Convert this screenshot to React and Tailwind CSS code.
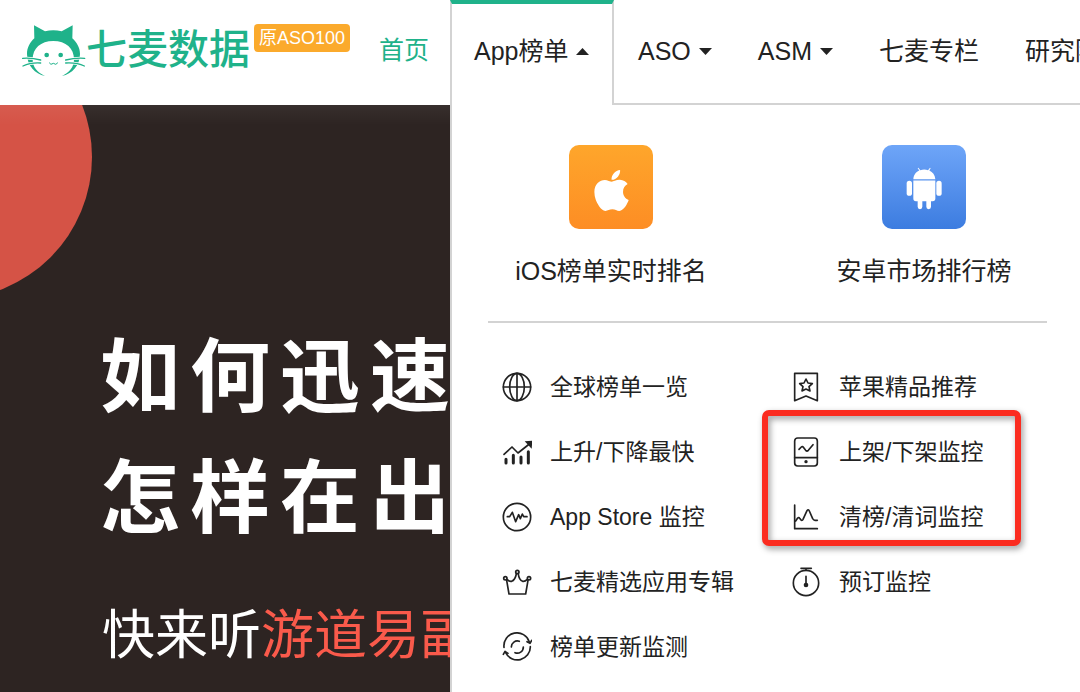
import React from "react";
import { FaApple } from "react-icons/fa";

const LineIcon = ({ children }) => (
  <svg
    viewBox="0 0 90 90"
    className="w-[30px] h-[30px] shrink-0"
    fill="none"
    stroke="currentColor"
    strokeWidth="5"
    strokeLinecap="round"
    strokeLinejoin="round"
    aria-hidden="true"
  >
    {children}
  </svg>
);

const GlobeIcon = () => (
  <LineIcon>
    <circle cx="45" cy="45" r="41" />
    <ellipse cx="45" cy="45" rx="22" ry="41" />
    <path d="M45 4V86M4 45H86" />
  </LineIcon>
);

const TrendIcon = () => (
  <LineIcon>
    <path d="M12 67V78M34 55V78M57 60V78M79 44V78" strokeWidth="9" />
    <path d="M6 52L30 30L48 48L82 21" />
    <path d="M68 13L91 11L89 35Z" fill="currentColor" stroke="none" />
  </LineIcon>
);

const PulseIcon = () => (
  <LineIcon>
    <circle cx="45" cy="45" r="41" />
    <path d="M16 44H23L31 31L41 59L50 38L55 50L61 36L65 44H75" />
  </LineIcon>
);

const CrownIcon = () => (
  <LineIcon>
    <circle cx="10" cy="34" r="5" />
    <circle cx="46" cy="15" r="5" />
    <circle cx="81" cy="34" r="5" />
    <path d="M14 40L21 81H71L78 40" />
    <path d="M15 37C20 42 24 44 29 43C37 40 41 31 43 21M76 37C71 42 67 44 62 43C54 40 50 31 49 21" />
  </LineIcon>
);

const RefreshIcon = () => (
  <LineIcon>
    <path d="M6 46A39 39 0 0 1 82 30M85 44A39 39 0 0 1 11 62" />
    <path d="M75 29L84 34L89 25M4 67L9 58L18 64" />
    <path d="M28 45A18 18 0 0 1 52 28M64 45A18 18 0 0 1 39 62" />
  </LineIcon>
);

const BookmarkIcon = () => (
  <LineIcon>
    <path d="M11 4H79V86L45 72L11 86Z" />
    <path d="M45 21L51 33L64 35L54 44L57 57L45 51L33 57L36 44L26 35L39 33Z" />
  </LineIcon>
);

const PhoneIcon = () => (
  <LineIcon>
    <rect x="11" y="3" width="68" height="84" rx="9" />
    <path d="M11 62H79M24 37L31 30Q34 27 37 31L44 40Q48 44 52 40L66 23" />
    <circle cx="45" cy="74" r="5" fill="currentColor" stroke="none" />
  </LineIcon>
);

const CurveIcon = () => (
  <LineIcon>
    <path d="M11 9V80H79" />
    <path d="M14 57L20 48Q23 45 26 49L30 54Q33 57 36 52L48 26Q52 20 55 27L65 50Q68 55 72 55H79" />
  </LineIcon>
);

const TimerIcon = () => (
  <LineIcon>
    <circle cx="45" cy="48" r="38" />
    <path d="M30 4H61M45 4V10M45 28V52" />
    <circle cx="45" cy="54" r="7" fill="currentColor" stroke="none" />
  </LineIcon>
);

const AndroidIcon = () => (
  <svg viewBox="320 110 108 128" className="w-9 h-[43px]" fill="#fff" aria-hidden="true">
    <path d="M342 146C343 132 351 124 360 120L355 113L357 112L363 119Q375 115 386 119L392 112L394 113L390 120C400 125 407 133 408 146Z" />
    <path d="M342 150H408V204Q408 212 400 212H395V229A7 7 0 0 1 381 229V212H369V229A7 7 0 0 1 355 229V212H350Q342 212 342 204Z" />
    <rect x="322" y="151" width="16" height="45" rx="8" />
    <rect x="411" y="151" width="16" height="45" rx="8" />
  </svg>
);

const CatLogo = () => (
  <svg viewBox="66 72 192 159" className="w-16 h-[53px] shrink-0" fill="none" aria-hidden="true">
    <path
      d="M135 228C105 222 81 196 81 162C81 143 90 127 103 115L102 76L135 94Q160 87 185 94L218 76L217 115C230 127 240 143 240 162C240 196 216 222 186 228C208 218 222 202 222 178C222 145 198 123 160 123C122 123 98 145 98 178C98 202 112 218 135 228Z"
      fill="#1fb28a"
    />
    <path d="M68 175Q95 173 122 180M69 198Q92 187 122 189M254 175Q226 173 197 180M253 198Q230 187 197 189" stroke="#fff" strokeWidth="8" />
    <path d="M68 175Q95 173 122 180M69 198Q92 187 122 189M254 175Q226 173 197 180M253 198Q230 187 197 189" stroke="#1fb28a" strokeWidth="4" strokeLinecap="round" />
    <circle cx="140" cy="165" r="7" fill="#1fb28a" />
    <circle cx="182" cy="165" r="7" fill="#1fb28a" />
    <path d="M148 189Q152 197 160 190Q168 197 173 189" stroke="#1fb28a" strokeWidth="3" strokeLinecap="round" />
  </svg>
);

const Caret = ({ up }) => (
  <svg viewBox="0 0 13 7" className="w-[13px] h-[7px]" fill="currentColor" aria-hidden="true">
    <path d={up ? "M0 7L6.5 0L13 7Z" : "M0 0H13L6.5 7Z"} />
  </svg>
);

const leftLinks = [
  { label: "全球榜单一览", Icon: GlobeIcon },
  { label: "上升/下降最快", Icon: TrendIcon },
  { label: "App Store 监控", Icon: PulseIcon },
  { label: "七麦精选应用专辑", Icon: CrownIcon },
  { label: "榜单更新监测", Icon: RefreshIcon },
];

const rightLinks = [
  { label: "苹果精品推荐", Icon: BookmarkIcon },
  { label: "上架/下架监控", Icon: PhoneIcon },
  { label: "清榜/清词监控", Icon: CurveIcon },
  { label: "预订监控", Icon: TimerIcon },
];

const MenuLink = ({ label, Icon }) => (
  <li>
    <a href="#" className="flex items-center gap-[18px] h-[65px] text-[23px] whitespace-nowrap">
      <Icon />
      {label}
    </a>
  </li>
);

const Header = () => (
  <header className="flex h-[105px] bg-white text-[25px] whitespace-nowrap">
    <div className="w-5/12 shrink-0 flex items-center justify-between pl-[22px] pr-[21px] pb-1">
      <a href="#" className="flex items-center text-[#1fb28a]">
        <CatLogo />
        <span className="text-[41px] leading-[53px] font-medium">七麦数据</span>
        <span className="self-start rounded bg-[#fbaa2c] px-[5px] ml-1 text-[18px] leading-7 text-white">
          原ASO100
        </span>
      </a>
      <a href="#" className="text-[#1fb28a]">首页</a>
    </div>
    <nav className="flex flex-1 min-w-0">
      <button
        type="button"
        className="flex shrink-0 items-center gap-2 w-[164px] pl-[22px] pb-[6px] border-x-2 border-t-4 border-x-[#d3d3d3] border-t-[#1fb28a]"
      >
        App榜单
        <Caret up />
      </button>
      <div className="flex flex-1 min-w-0 items-center gap-[46px] pl-6 border-b-2 border-[#d3d3d3] overflow-hidden">
        <button type="button" className="flex shrink-0 items-center gap-2">
          ASO
          <Caret />
        </button>
        <button type="button" className="flex shrink-0 items-center gap-2">
          ASM
          <Caret />
        </button>
        <a href="#" className="shrink-0">七麦专栏</a>
        <a href="#" className="shrink-0">研究院</a>
      </div>
    </nav>
  </header>
);

const Hero = () => (
  <section className="relative w-5/12 shrink-0 overflow-hidden bg-[#2d2422] pl-[100px] pt-[212px] text-white whitespace-nowrap">
    <div className="absolute -left-48 -top-[90px] size-[284px] rounded-full bg-[#d55346]" />
    <div className="absolute inset-x-0 top-0 h-5 bg-linear-to-b from-white/5 to-transparent" />
    <h1 className="text-[80px] leading-[121px] font-bold tracking-[10px]">
      如何迅速
      <br />
      怎样在出
    </h1>
    <p className="pt-10 pl-[2px] text-[53px] leading-[74px]">
      快来听<span className="text-[#fa5a4b]">游道易副</span>
    </p>
  </section>
);

const RankMenu = () => (
  <section className="flex-1 min-w-0 bg-white border-l-2 border-[#d3d3d3] pl-9 pr-[33px]">
    <div className="flex justify-between pt-10 pb-[30px] border-b-2 border-[#d3d3d3] text-[25px]">
      <a href="#" className="flex w-[246px] flex-col items-center gap-6">
        <span className="flex size-[84px] items-center justify-center rounded-[10px] bg-linear-to-b from-[#fea62b] to-[#fd8d24] pt-[6px]">
          <FaApple className="text-white w-[35px] h-[47px]" />
        </span>
        iOS榜单实时排名
      </a>
      <a href="#" className="flex w-[246px] flex-col items-center gap-6">
        <span className="flex size-[84px] items-center justify-center rounded-[10px] bg-linear-to-b from-[#6ea5f8] to-[#3c7ce0] pt-[2px]">
          <AndroidIcon />
        </span>
        安卓市场排行榜
      </a>
    </div>
    <div className="flex pl-[14px] pt-8">
      <ul className="w-[289px] shrink-0">
        {leftLinks.map((item) => (
          <MenuLink key={item.label} {...item} />
        ))}
      </ul>
      <div className="relative">
        <ul>
          {rightLinks.map((item) => (
            <MenuLink key={item.label} {...item} />
          ))}
        </ul>
        {/* Highlight around the two monitoring links */}
        <div className="pointer-events-none absolute -left-[29px] top-[55px] h-[136px] w-[259px] rounded-[7px] border-[6px] border-[#fb2c20] drop-shadow-[2px_3px_3px_rgba(0,0,0,0.4)]" />
      </div>
    </div>
  </section>
);

const App = () => (
  <div className="flex min-h-screen flex-col overflow-hidden text-[#222] font-['Liberation_Sans','Noto_Sans_CJK_SC',sans-serif]">
    <Header />
    <main className="flex flex-1">
      <Hero />
      <RankMenu />
    </main>
  </div>
);

export default App;
